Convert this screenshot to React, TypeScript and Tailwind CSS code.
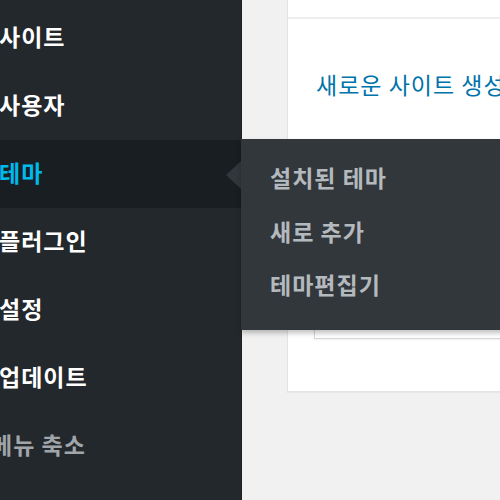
import React from 'react';

const font = "font-['Noto_Sans_CJK_KR','Noto_Sans',sans-serif]";

const menu = ['사이트', '사용자', '테마', '플러그인', '설정', '업데이트'];
const submenu = ['설치된 테마', '새로 추가', '테마편집기'];

export default function App() {
  return (
    <div className={`relative flex w-[500px] h-[500px] overflow-hidden bg-[#f1f1f1] ${font}`}>
      {/* admin menu */}
      <div className="w-[241px] shrink-0 bg-[#23282d] pt-[4px] z-10">
        {menu.map((label) =>
          label === '테마' ? (
            <div key={label} className="relative h-[68px] flex items-center pb-[3px] bg-[#191e23]">
              <span className="-ml-[1px] text-[23px] tracking-[1px] font-bold leading-none text-[#00b9eb]">{label}</span>
              <div className="absolute right-0 top-[21px] w-0 h-0 border-y-[14px] border-y-transparent border-r-[15px] border-r-[#32373c]" />
              <div className="absolute left-full -top-[1px] w-[300px] h-[191px] bg-[#32373c] pt-[12px] pl-[29px] shadow-[0_3px_5px_rgba(0,0,0,0.25)]">
                {submenu.map((s) => (
                  <div key={s} className="h-[53.5px] flex items-center text-[23px] tracking-[1px] font-bold leading-none whitespace-nowrap text-[rgba(240,245,250,0.7)]">
                    {s}
                  </div>
                ))}
              </div>
            </div>
          ) : (
            <div key={label} className="h-[68px] flex items-center pb-[3px]">
              <span className="-ml-[1px] text-[23px] tracking-[1px] font-bold leading-none text-white">{label}</span>
            </div>
          )
        )}
        <div className="h-[68px] flex items-center pb-[3px]">
          <span className="-ml-[9px] text-[23px] tracking-[1px] font-bold leading-none text-[#a0a5aa] whitespace-nowrap">메뉴 축소</span>
        </div>
      </div>

      {/* content */}
      <div className="flex-1 border-l border-[#1d2125]">
        <div className="ml-[45px] w-[400px] h-[392px] bg-white border border-t-0 border-[#e2e4e7] shadow-[0_1px_1px_rgba(0,0,0,0.04)]">
          <div className="h-[19px] border-b-2 border-[#eeeeee]" />
          <div className="pt-[50px] pl-[28px] text-[23px] tracking-[1px] leading-[30px] text-[#0073aa] whitespace-nowrap">
            새로운 사이트 생성
          </div>
          <div className="ml-[26px] mt-[46px] h-[194px] border border-[#d6d6d6] shadow-[0_1px_2px_rgba(0,0,0,0.06)]" />
        </div>
      </div>
    </div>
  );
}
